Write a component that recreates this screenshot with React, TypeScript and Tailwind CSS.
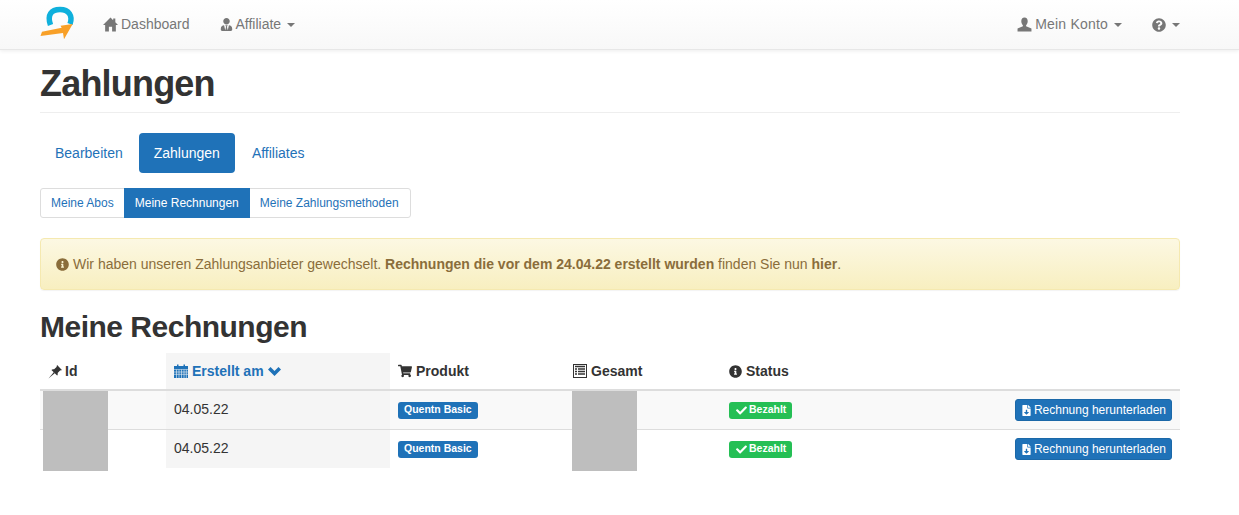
import { FaCheck, FaFileDownload, FaInfoCircle, FaQuestionCircle, FaShoppingCart, FaUserTie } from "react-icons/fa";

const ROWS = ["04.05.22", "04.05.22"];

function Caret() {
  return <span className="ml-[3px] inline-block h-0 w-0 border-x-4 border-t-4 border-x-transparent border-t-[#777]" />;
}

function Logo() {
  return (
    <svg width="36" height="40" viewBox="0 0 36 40" className="block">
      <path d="M10.500 20 C 7 10 11 4.500 20 4.500 C 29 4.500 33 11 30 19" fill="none" stroke="#0fb0dc" strokeWidth="5.500" />
      <path d="M0.500 31 L2 26.700 L21.700 22.700 L20.500 20.800 L32.700 19 L24 34.300 L23 28 Z" fill="#f8a028" />
    </svg>
  );
}

function HomeIcon() {
  return (
    <svg width="15" height="15" viewBox="0 0 14 14" className="block" fill="currentColor">
      <path d="M7 0.500L0 7.500H2V13.500H5.500V9H8.500V13.500H12V7.500H14L11.500 5V1.500H9.500V3Z" />
    </svg>
  );
}

function UserIcon() {
  return (
    <svg width="15" height="15" viewBox="0 0 14 14" className="block" fill="currentColor">
      <path d="M7 0.500C5 0.500 4 2 4 4C4 5.500 4.700 7 5.500 7.700V8.700L0.500 10.700V13.500H13.500V10.700L8.500 8.700V7.700C9.300 7 10 5.500 10 4C10 2 9 0.500 7 0.500Z" />
    </svg>
  );
}

function PinIcon() {
  return (
    <svg width="15" height="15" viewBox="0 0 14 14" className="block" fill="currentColor">
      <path d="M8.500 1L13 5.500L12 6L11.500 5.800L9 8.300C9.300 9.500 9 10.300 8.500 10.800L3.200 5.500C3.800 5 4.500 4.700 5.700 5L8.200 2.500L8 2Z" />
      <path d="M0.500 13.500L5.500 7.500L6.500 8.500Z" />
    </svg>
  );
}

function CalendarIcon() {
  return (
    <svg width="14" height="14" viewBox="0 0 14 14" className="block" fill="currentColor">
      <path d="M0 2H3V0.500H4.500V2H9.500V0.500H11V2H14V5H0Z" />
      <path d="M0 5.500H14V14H0Z" />
      <path d="M0 8H14M0 10.300H14M2.500 5.500V14M5 5.500V14M7.500 5.500V14M10 5.500V14M12.300 5.500V14" stroke="#f5f5f5" strokeWidth="0.600" />
    </svg>
  );
}

function ChevronIcon() {
  return (
    <svg width="13" height="9" viewBox="0 0 13 9" className="block" fill="currentColor">
      <path d="M0 2.500L2.500 0L6.500 4L10.500 0L13 2.500L6.500 9Z" />
    </svg>
  );
}

function ListAltIcon() {
  return (
    <svg width="14" height="14" viewBox="0 0 14 14" className="block">
      <rect x="0.500" y="0.500" width="13" height="13" fill="none" stroke="#333" />
      <path d="M2 2.500h10M2 5h2M5 5h7M2 7.500h2M5 7.500h7M2 10h2M5 10h7" stroke="#333" strokeWidth="1.300" />
    </svg>
  );
}

function Th({ children, className = "text-[#333]" }: { children?: React.ReactNode; className?: string }) {
  return <th className={`h-[38px] border-b-2 border-[#ddd] px-2 text-left align-middle text-[14px] font-bold ${className}`}>{children}</th>;
}

export default function App() {
  return (
    <div className="min-h-[515px] bg-white font-['Liberation_Sans',Arial,sans-serif] text-[14px] text-[#333]">
      {/* Navbar */}
      <nav className="flex h-[50px] items-center border-b border-[#e7e7e7] bg-gradient-to-b from-white to-[#f8f8f8] pl-[40px] pr-[59px] text-[#777] shadow-[0_1px_4px_rgba(0,0,0,0.08)]">
        <Logo />
        <a className="ml-[27px] flex items-center gap-[3px]">
          <HomeIcon /> Dashboard
        </a>
        <a className="ml-[30px] flex items-center gap-[3px]">
          <FaUserTie className="text-[13px]" /> Affiliate <Caret />
        </a>
        <a className="ml-auto flex items-center gap-[3px] tracking-[0.2px]">
          <UserIcon /> Mein Konto <Caret />
        </a>
        <a className="ml-[30px] flex items-center gap-[3px]">
          <FaQuestionCircle className="text-[14px]" /> <Caret />
        </a>
      </nav>

      <main className="mx-[40px] w-[1140px]">
        <div className="flex h-[63px] items-end border-b border-[#eee] pb-[8px]">
          <h1 className="text-[36px] font-bold leading-[40px] tracking-[-0.8px] text-[#333]">Zahlungen</h1>
        </div>

        {/* Tabs */}
        <div className="mt-[20px] flex h-[40px] gap-[2px] text-[#1f72b8]">
          <a className="flex items-center rounded-[4px] pl-[15px] pr-[14px]">Bearbeiten</a>
          <a className="flex items-center rounded-[4px] bg-[#1f72b8] px-[15px] text-white">Zahlungen</a>
          <a className="flex items-center rounded-[4px] px-[15px]">Affiliates</a>
        </div>

        <div className="mt-[15px] flex h-[30px] w-fit rounded-[3px] border border-[#ddd] text-[12px] text-[#1f72b8]">
          <a className="flex items-center px-[10px]">Meine Abos</a>
          <a className="-my-px flex items-center bg-[#1f72b8] px-[11px] text-white">Meine Rechnungen</a>
          <a className="flex items-center pl-[10px] pr-[11px]">Meine Zahlungsmethoden</a>
        </div>

        {/* Alert */}
        <div className="mt-[20px] flex h-[52px] items-center rounded-[4px] border border-[#f5e9b0] bg-gradient-to-b from-[#fcf8e3] to-[#f8efc0] px-[15px] text-[#8a6d3b] shadow-[0_1px_1px_rgba(0,0,0,0.05)]">
          <FaInfoCircle className="mr-[4px] text-[13px]" />
          <span>
            Wir haben unseren Zahlungsanbieter gewechselt. <b>Rechnungen die vor dem 24.04.22 erstellt wurden</b> finden Sie nun <b>hier</b>.
          </span>
        </div>

        <h2 className="mt-[20px] text-[30px] font-bold leading-[33px] tracking-[-0.5px] text-[#333]">Meine Rechnungen</h2>

        {/* Table */}
        <div className="relative mt-[10px]">
          <table className="w-full table-fixed border-separate border-spacing-0">
            <colgroup>
              <col className="w-[126px]" />
              <col className="w-[224px]" />
              <col className="w-[175px]" />
              <col className="w-[156px]" />
              <col className="w-[150px]" />
              <col />
            </colgroup>
            <thead>
              <tr>
                <Th>
                  <span className="flex items-center gap-[2px]"><PinIcon /> Id</span>
                </Th>
                <Th className="bg-[#f5f5f5] text-[#1f72b8]">
                  <span className="flex items-center gap-[4px]">
                    <CalendarIcon /> Erstellt am <ChevronIcon />
                  </span>
                </Th>
                <Th>
                  <span className="flex items-center gap-[4px]"><FaShoppingCart className="text-[14px]" /> Produkt</span>
                </Th>
                <Th>
                  <span className="flex items-center gap-[4px]"><ListAltIcon /> Gesamt</span>
                </Th>
                <Th>
                  <span className="flex items-center gap-[4px]"><FaInfoCircle className="text-[13px]" /> Status</span>
                </Th>
                <Th />
              </tr>
            </thead>
            <tbody>
              {ROWS.map((date, i) => {
                const cell = i === 0 ? "h-[39px] border-b border-[#ddd] px-2" : "h-[38px] px-2";
                const stripe = i === 0 ? "bg-[#f9f9f9]" : "";
                return (
                  <tr key={i}>
                    <td className={`${cell} ${stripe}`} />
                    <td className={`${cell} bg-[#f5f5f5] pb-[2px]`}>{date}</td>
                    <td className={`${cell} ${stripe}`}>
                      <span className="flex h-[17px] w-fit items-center rounded-[3px] bg-[#1f72b8] px-[6px] text-[10.500px] font-bold text-white">Quentn Basic</span>
                    </td>
                    <td className={`${cell} ${stripe}`} />
                    <td className={`${cell} ${stripe}`}>
                      <span className="flex h-[17px] w-fit items-center gap-[2px] rounded-[3px] bg-[#25bf55] pl-[7px] pr-[6px] text-[10.500px] font-bold text-white">
                        <FaCheck className="text-[11px]" /> Bezahlt
                      </span>
                    </td>
                    <td className={`${cell} ${stripe}`}>
                      <a className="ml-auto flex h-[22px] w-fit items-center gap-[2px] rounded-[3px] border border-[#1b68a8] bg-[#1f72b8] px-[5px] text-[12px] text-white">
                        <FaFileDownload className="text-[11px]" /> Rechnung herunterladen
                      </a>
                    </td>
                  </tr>
                );
              })}
            </tbody>
          </table>
          {/* redacted cells lie over the table */}
          <div className="absolute left-[3px] top-[38px] h-[80px] w-[65px] bg-[#bebebe]" />
          <div className="absolute left-[532px] top-[38px] h-[80px] w-[65px] bg-[#bebebe]" />
        </div>
      </main>
    </div>
  );
}
